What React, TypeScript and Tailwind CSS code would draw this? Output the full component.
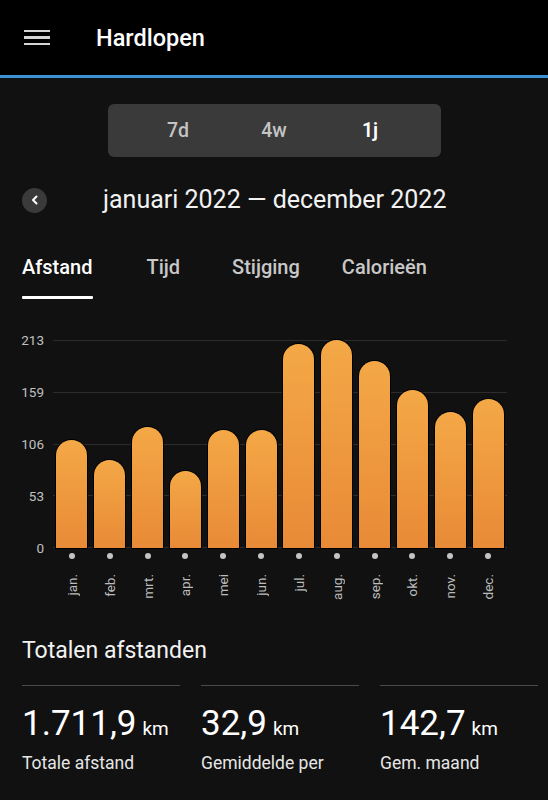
import React from "react";

const months = ["jan.", "feb.", "mrt.", "apr.", "mei", "jun.", "jul.", "aug.", "sep.", "okt.", "nov.", "dec."];
const heights = [108, 88, 121, 77, 118, 118, 204, 208, 187, 158, 136, 149];
const yLabels = ["213", "159", "106", "53", "0"];

export default function App() {
  return (
    <div className="w-[548px] h-[800px] overflow-hidden bg-[#111111] text-white font-['Roboto',sans-serif]">
      {/* Header */}
      <div className="h-[78px] bg-black border-b-[3px] border-[#3b90d6] flex items-center">
        <div className="ml-[24px] flex flex-col gap-[4px] w-[26px]">
          <div className="h-[2.5px] bg-[#d4d4d4]" />
          <div className="h-[2.5px] bg-[#d4d4d4]" />
          <div className="h-[2.5px] bg-[#d4d4d4]" />
        </div>
        <div className="ml-[46px] text-[23.5px] font-medium leading-[28px] text-white">Hardlopen</div>
      </div>

      {/* Segmented control */}
      <div className="pt-[26px] flex justify-center">
        <div className="w-[333px] h-[53px] rounded-[6px] bg-[#3a3a3a] flex items-center justify-center">
          <div className="w-[96px] text-center text-[19.5px] font-medium text-[#c4c4c4]">7d</div>
          <div className="w-[96px] text-center text-[19.5px] font-medium text-[#c4c4c4]">4w</div>
          <div className="w-[96px] text-center text-[19.5px] font-semibold text-white">1j</div>
        </div>
      </div>

      {/* Date row */}
      <div className="mt-[30px] h-[26px] flex items-center pl-[22px]">
        <div className="w-[25px] h-[25px] rounded-full bg-[#3a3a3a] flex items-center justify-center">
          <svg width="12" height="12" viewBox="0 0 12 12">
            <path d="M7.5 2.5 L4 6 L7.5 9.5" stroke="white" strokeWidth="2" fill="none" strokeLinecap="round" strokeLinejoin="round" />
          </svg>
        </div>
        <div className="ml-[56px] text-[25px] leading-[30px] text-[#f2f2f2]">januari 2022 — december 2022</div>
      </div>

      {/* Tabs */}
      <div className="mt-[42px] pl-[22px]">
        <div className="flex text-[20px] leading-[24px] font-medium">
          <span className="text-white">Afstand</span>
          <span className="ml-[54px] text-[#c8c8c8]">Tijd</span>
          <span className="ml-[52px] text-[#c8c8c8]">Stijging</span>
          <span className="ml-[42px] text-[#c8c8c8]">Calorieën</span>
        </div>
        <div className="mt-[17px] w-[71px] h-[3px] bg-white rounded-[1px]" />
      </div>

      {/* Chart */}
      <div className="mt-[41px] flex">
        <div className="w-[53px] h-[224px] -my-[8px] flex flex-col justify-between pr-[9px]">
          {yLabels.map((l) => (
            <div key={l} className="h-[16px] leading-[16px] text-[13.5px] text-[#c0c0c0] text-right">
              {l}
            </div>
          ))}
        </div>
        <div className="relative w-[454px] h-[208px]">
          <div className="absolute inset-0 flex flex-col justify-between">
            {yLabels.map((l) => (
              <div key={l} className="h-[1px] bg-[#2c2c2c]" />
            ))}
          </div>
          <div className="relative h-full grid grid-cols-12 items-end">
            {heights.map((h, i) => (
              <div key={i} className="flex justify-center">
                <div
                  className="w-[31px] rounded-t-full bg-linear-to-b from-[#f4a846] to-[#e88a37] shadow-[0_0_0_1px_#000]"
                  style={{ height: `${h}px` }}
                />
              </div>
            ))}
          </div>
        </div>
      </div>
      <div className="ml-[53px] w-[454px] grid grid-cols-12">
        {months.map((m) => (
          <div key={m} className="flex flex-col items-center">
            <div className="mt-[5px] w-[6px] h-[6px] rounded-full bg-[#c4c4c4]" />
            <div className="mt-[15px] text-[13.5px] leading-[16px] text-[#bcbcbc] [writing-mode:vertical-rl] rotate-180">
              {m}
            </div>
          </div>
        ))}
      </div>

      {/* Totals */}
      <div className="mt-[37px] pl-[22px] pr-[10px]">
        <div className="text-[23px] leading-[28px] text-[#f2f2f2]">Totalen afstanden</div>
        <div className="mt-[20px] grid grid-cols-3 gap-[21px]">
          {[
            ["1.711,9", "Totale afstand"],
            ["32,9", "Gemiddelde per"],
            ["142,7", "Gem. maand"],
          ].map(([v, l]) => (
            <div key={l}>
              <div className="h-[1px] bg-[#4a4a4a]" />
              <div className="mt-[18px] flex items-baseline">
                <span className="text-[35px] leading-[40px] text-white">{v}</span>
                <span className="ml-[6px] text-[19px] text-white">km</span>
              </div>
              <div className="mt-[8px] text-[17.5px] leading-[22px] text-[#e6e6e6]">{l}</div>
            </div>
          ))}
        </div>
      </div>
    </div>
  );
}
